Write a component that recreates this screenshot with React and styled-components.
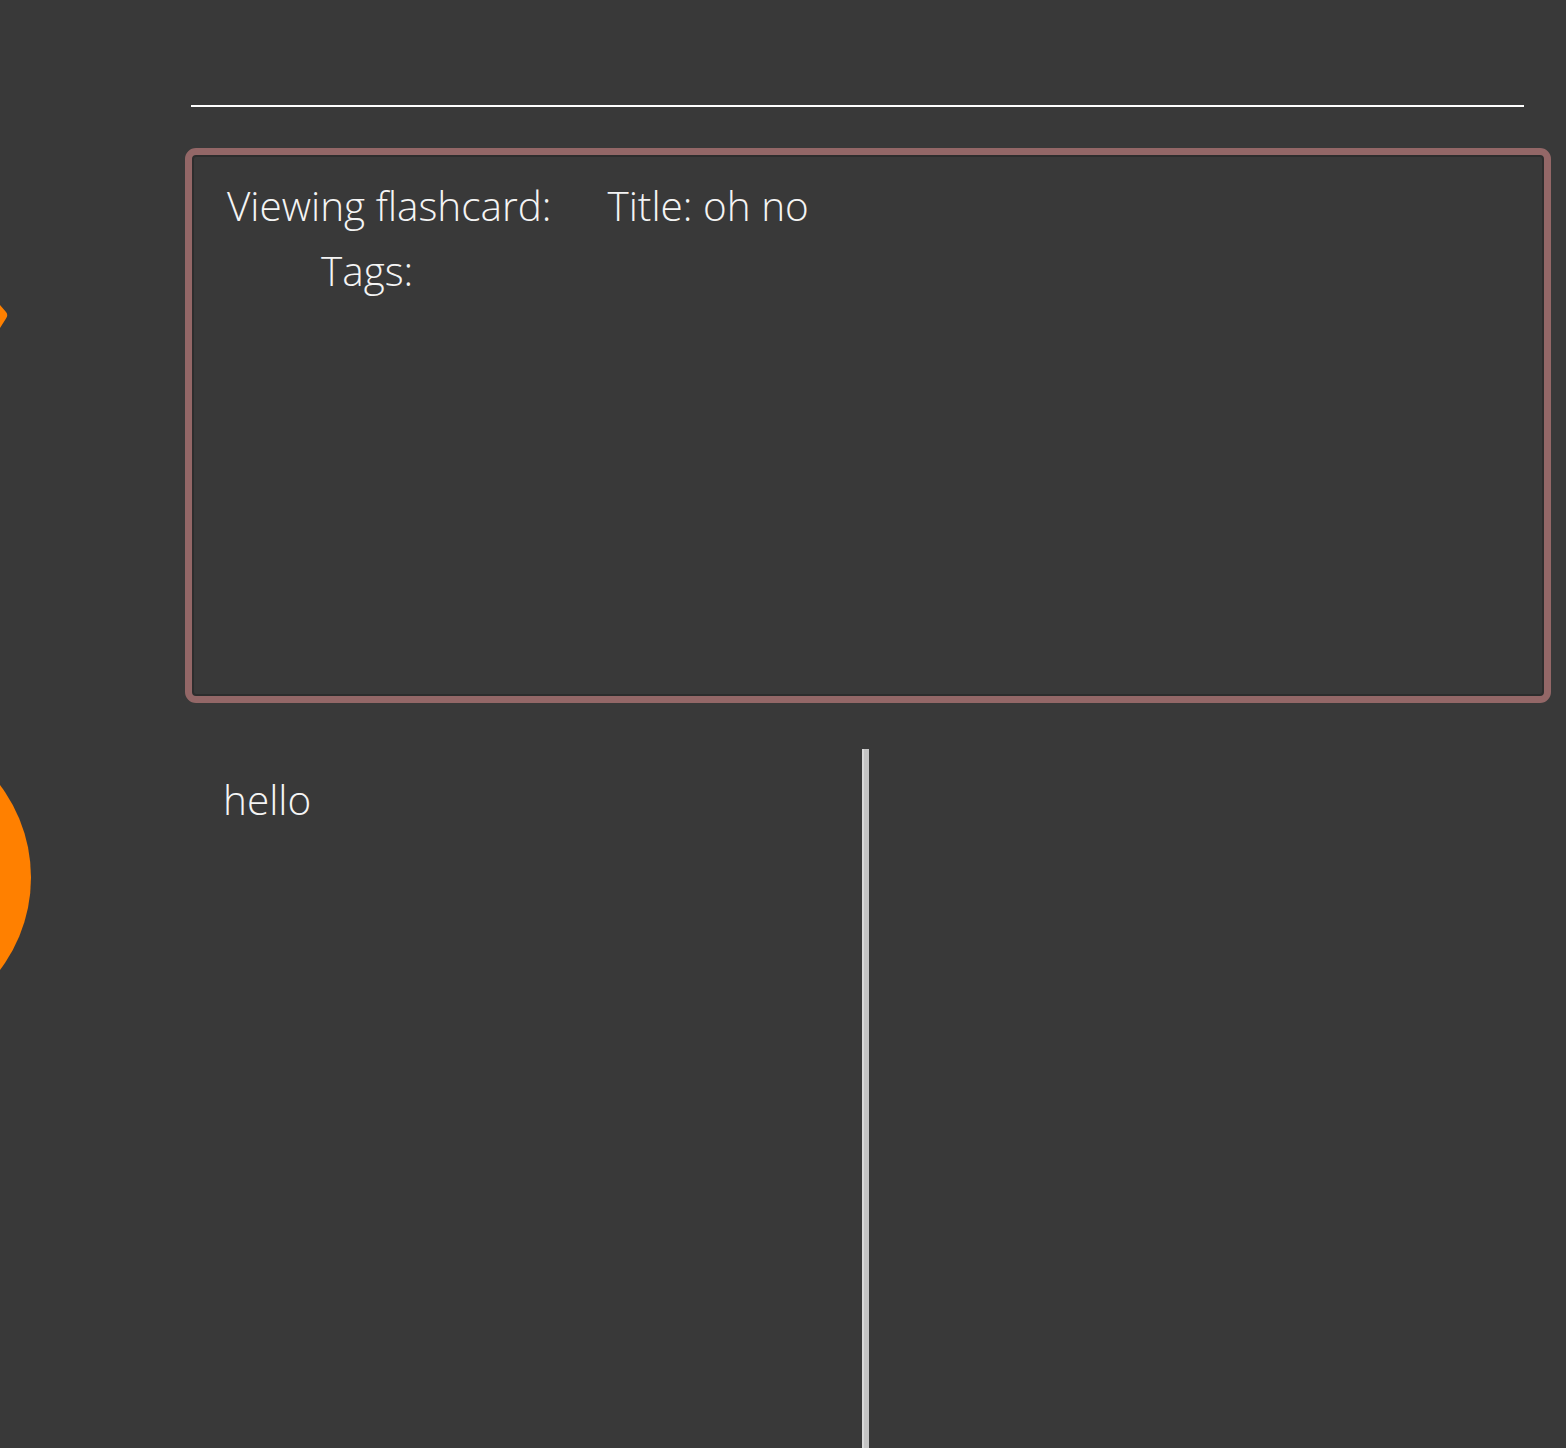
import React from "react";
import styled, { createGlobalStyle } from "styled-components";

const GlobalStyle = createGlobalStyle`
  html, body {
    margin: 0;
    padding: 0;
    background: #393939;
    overflow: hidden;
  }
  body {
    font-family: "Open Sans", "Noto Sans", "Liberation Sans", sans-serif;
    font-weight: 300;
    color: #ffffff;
  }
`;

const Page = styled.div`
  display: grid;
  grid-template-columns: 185px 1fr;
  width: 1566px;
  height: 1448px;
  background: #393939;
  overflow: hidden;
`;

const Sidebar = styled.aside`
  position: relative;
`;

const Deco = styled.svg`
  position: absolute;
  left: 0;
  top: 0;
`;

const Main = styled.main`
  display: flex;
  flex-direction: column;
  padding: 105px 15px 0 0;
  min-width: 0;
`;

const Rule = styled.hr`
  margin: 0 27px 0 6px;
  border: none;
  height: 2px;
  background: #ffffff;
`;

const Card = styled.section`
  margin-top: 41px;
  height: 555px;
  box-sizing: border-box;
  border: 7px solid #936767;
  border-radius: 11px;
  box-shadow: inset 0 0 0 2px #2d2d2d;
  padding: 23px 0 0 35px;
`;

const Row = styled.div`
  display: flex;
  align-items: baseline;
  gap: ${(p) => p.$gap || 0}px;
  padding-left: ${(p) => p.$indent || 0}px;
  height: ${(p) => p.$h}px;
`;

const Text = styled.span`
  font-size: ${(p) => p.$size || 40.5}px;
  font-weight: 300;
  color: #f4f4f4;
  white-space: nowrap;
`;

const Lower = styled.div`
  margin-top: 46px;
  display: flex;
  flex: 1;
`;

const LeftPane = styled.div`
  flex: 0 0 677px;
  padding: 23px 0 0 38px;
  box-sizing: border-box;
`;

const Splitter = styled.div`
  flex: 0 0 7px;
  background: #c4c4c4;
  border-left: 2px solid #d8d8d8;
  box-sizing: border-box;
`;

const RightPane = styled.div`
  flex: 1;
`;

export default function App() {
  return (
    <>
      <GlobalStyle />
      <Page>
        <Sidebar>
          <Deco width="185" height="1448" viewBox="0 0 185 1448">
            <path d="M0 305 L6 312 Q8.5 315 6 318.5 L0 328 Z" fill="#ff8000" />
            <circle cx="-122.5" cy="877.5" r="153.5" fill="#ff8000" />
          </Deco>
        </Sidebar>
        <Main>
          <Rule />
          <Card>
            <Row $h={65} $gap={56}>
              <Text>Viewing flashcard:</Text>
              <Text>Title: oh no</Text>
            </Row>
            <Row $h={65} $indent={94}>
              <Text>Tags:</Text>
            </Row>
          </Card>
          <Lower>
            <LeftPane>
              <Text>hello</Text>
            </LeftPane>
            <Splitter />
            <RightPane />
          </Lower>
        </Main>
      </Page>
    </>
  );
}
